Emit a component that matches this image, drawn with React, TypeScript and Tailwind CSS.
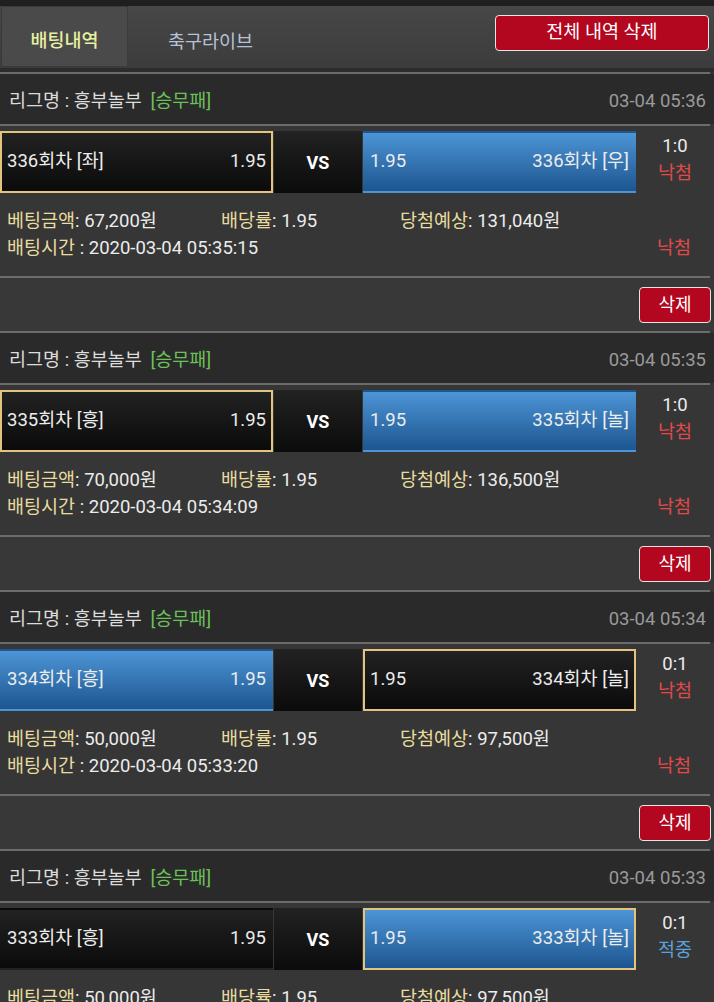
import React from 'react'

const FONT = { fontFamily: 'Roboto, "Noto Sans CJK KR", sans-serif' }

interface Bet {
  round: number
  left: string
  right: string
  pick: 'L' | 'R'
  win: 'L' | 'R'
  score: string
  result: '낙첨' | '적중'
  amount: string
  expect: string
  date: string
  time: string
}

const BETS: Bet[] = [
  { round: 336, left: '좌', right: '우', pick: 'L', win: 'R', score: '1:0', result: '낙첨', amount: '67,200원', expect: '131,040원', date: '03-04 05:36', time: '2020-03-04 05:35:15' },
  { round: 335, left: '흥', right: '놀', pick: 'L', win: 'R', score: '1:0', result: '낙첨', amount: '70,000원', expect: '136,500원', date: '03-04 05:35', time: '2020-03-04 05:34:09' },
  { round: 334, left: '흥', right: '놀', pick: 'R', win: 'L', score: '0:1', result: '낙첨', amount: '50,000원', expect: '97,500원', date: '03-04 05:34', time: '2020-03-04 05:33:20' },
  { round: 333, left: '흥', right: '놀', pick: 'R', win: 'R', score: '0:1', result: '적중', amount: '50,000원', expect: '97,500원', date: '03-04 05:33', time: '2020-03-04 05:32:11' },
]

function Side({ name, odds, side, picked, won }: { name: string; odds: string; side: 'L' | 'R'; picked: boolean; won: boolean }) {
  const bg = won
    ? 'bg-gradient-to-b from-[#4d95d6] to-[#1d5690]'
    : 'bg-gradient-to-b from-[#222222] to-[#0b0b0b]'
  const border = picked ? 'border-2 border-[#e2c47c]' : 'border-2 border-transparent'
  return (
    <div className={`w-[273px] h-[62px] flex items-center justify-between px-[5px] text-[18.5px] text-[#ececec] ${bg} ${border}`}>
      {side === 'L' ? (
        <>
          <span>{name}</span>
          <span>{odds}</span>
        </>
      ) : (
        <>
          <span>{odds}</span>
          <span>{name}</span>
        </>
      )}
    </div>
  )
}

function BetBlock({ b }: { b: Bet }) {
  const resColor = b.result === '적중' ? 'text-[#5aa2de]' : 'text-[#e04a4a]'
  return (
    <div>
      <div className="h-[2px] bg-[#6c6c6c] mr-[4px]" />
      <div className="h-[50px] bg-[#2a2a2a] flex items-center justify-between pt-[6px] pl-[9px] pr-[8px] text-[18.5px]">
        <div className="text-[#dcdcdc]">
          리그명 : 흥부놀부 <span className="ml-[4px] text-[#6cc05a]">[승무패]</span>
        </div>
        <div className="text-[#9a9a9a]">{b.date}</div>
      </div>
      <div className="h-[2px] bg-[#6c6c6c] mr-[4px]" />
      <div className="h-[150px] bg-[#363636] pt-[5px]">
        <div className="flex items-stretch">
          <Side name={`${b.round}회차 [${b.left}]`} odds="1.95" side="L" picked={b.pick === 'L'} won={b.win === 'L'} />
          <div className="w-[88px] h-[62px] flex items-center justify-center bg-gradient-to-b from-[#222222] to-[#0b0b0b] text-white font-bold text-[18px] ml-[1px] mr-[1px]">
            VS
          </div>
          <Side name={`${b.round}회차 [${b.right}]`} odds="1.95" side="R" picked={b.pick === 'R'} won={b.win === 'R'} />
          <div className="flex-1 flex flex-col items-center pt-[2px] text-[18.5px] leading-[27px]">
            <span className="text-[#ececec]">{b.score}</span>
            <span className={resColor}>{b.result}</span>
          </div>
        </div>
        <div className="mt-[15px] pl-[7px] text-[18.5px] leading-[27px]">
          <div className="flex">
            <span className="w-[214px]"><span className="text-[#e8dc9e]">베팅금액</span><span className="text-[#ececec]">: {b.amount}</span></span>
            <span className="w-[179px]"><span className="text-[#e8dc9e]">배당률</span><span className="text-[#ececec]">: 1.95</span></span>
            <span><span className="text-[#e8dc9e]">당첨예상</span><span className="text-[#ececec]">: {b.expect}</span></span>
          </div>
          <div className="flex justify-between pr-[23px]">
            <span><span className="text-[#e8dc9e]">배팅시간</span><span className="text-[#ececec]"> : {b.time}</span></span>
            <span className={resColor}>{b.result}</span>
          </div>
        </div>
      </div>
      <div className="h-[2px] bg-[#6c6c6c] mr-[4px]" />
      <div className="h-[53px] bg-[#383838] flex items-center justify-end pr-[3px]">
        <button className="w-[72px] h-[36px] rounded-[4px] border border-[#e6e6e6] bg-[#b3061f] text-white text-[18px]">
          삭제
        </button>
      </div>
    </div>
  )
}

export default function App() {
  return (
    <div style={FONT} className="w-[714px] h-[1002px] overflow-hidden bg-[#363636]">
      <div className="h-[6px] bg-[#1f1f1f]" />
      <div className="h-[62px] bg-gradient-to-b from-[#474747] to-[#3c3c3c] flex items-start">
        <div className="w-[127px] h-[61px] ml-[1px] bg-[#4a4a4a] border border-[#3a3a3a] flex items-end justify-center pb-[10px] text-[18.5px] font-medium text-[#e6f0a0]">
          배팅내역
        </div>
        <div className="ml-[40px] h-[61px] flex items-end pb-[10px] text-[18.5px] text-[#b6c2d6]">축구라이브</div>
        <div className="flex-1" />
        <button className="mt-[9px] mr-[5px] w-[214px] h-[36px] rounded-[4px] border border-[#e6e6e6] bg-[#b3061f] text-white text-[18.5px]">
          전체 내역 삭제
        </button>
      </div>
      <div className="h-[4px] bg-[#2c2c2c]" />
      {BETS.map(b => <BetBlock key={b.round} b={b} />)}
    </div>
  )
}
